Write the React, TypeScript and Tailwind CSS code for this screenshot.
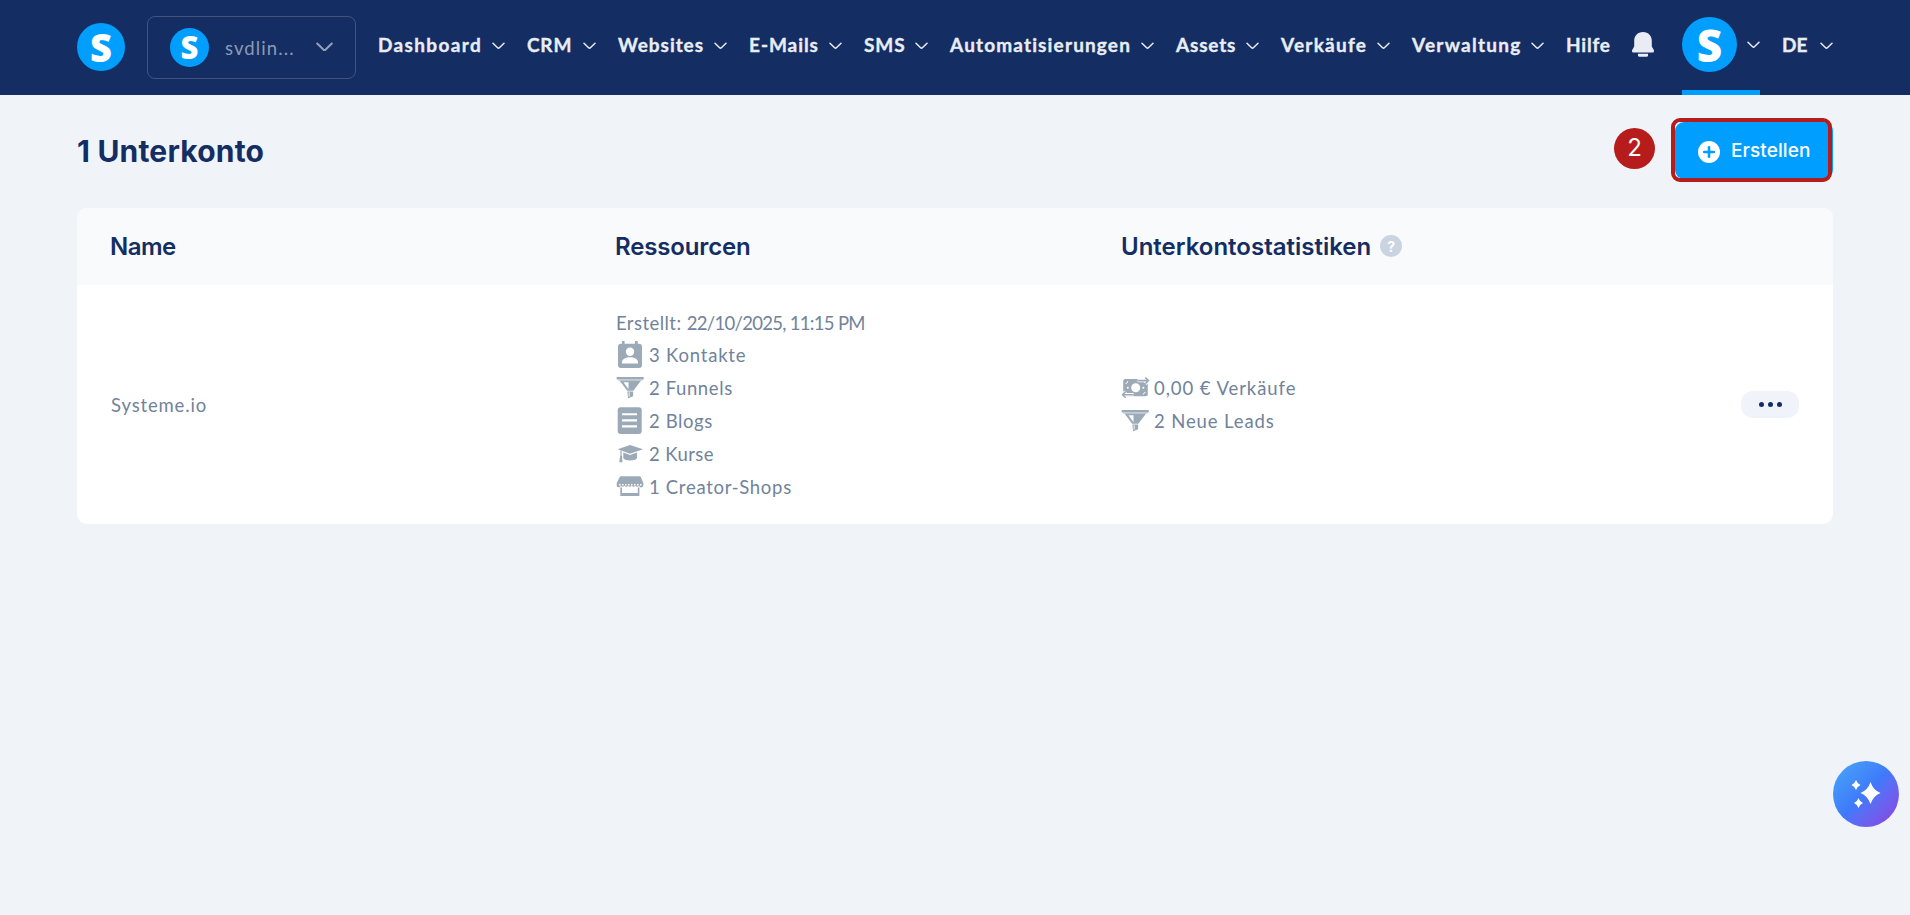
import type { ReactNode } from "react";

type NavItem = { label: string; width: string; tracking: string; menu?: boolean };

const navItems: NavItem[] = [
  { label: "Dashboard", width: "w-[149px]", tracking: "tracking-[1.35px]", menu: true },
  { label: "CRM", width: "w-[91px]", tracking: "tracking-[0.8px]", menu: true },
  { label: "Websites", width: "w-[131px]", tracking: "tracking-[0.95px]", menu: true },
  { label: "E-Mails", width: "w-[115px]", tracking: "tracking-[0.95px]", menu: true },
  { label: "SMS", width: "w-[86px]", tracking: "tracking-[0.9px]", menu: true },
  { label: "Automatisierungen", width: "w-[226px]", tracking: "tracking-[1.15px]", menu: true },
  { label: "Assets", width: "w-[105px]", tracking: "tracking-[0.8px]", menu: true },
  { label: "Verkäufe", width: "w-[131px]", tracking: "tracking-[1.25px]", menu: true },
  { label: "Verwaltung", width: "w-[154px]", tracking: "tracking-[1.25px]", menu: true },
  { label: "Hilfe", width: "w-[66px]", tracking: "tracking-[0.8px]" },
];

function Chevron({ className = "" }: { className?: string }) {
  return (
    <svg viewBox="0 0 13 8" className={`w-[13px] h-2 shrink-0 ${className}`} fill="none">
      <path d="M1 1.2 5.6 5.7Q6.5 6.5 7.4 5.7L12 1.2" stroke="currentColor" strokeWidth="1.5" strokeLinecap="round" />
    </svg>
  );
}

function Logo({ size, text }: { size: string; text: string }) {
  return (
    <div className={`shrink-0 rounded-full bg-[#009fff] flex items-center justify-center ${size}`}>
      <span className={`font-['Open_Sans',sans-serif] font-extrabold leading-none text-white ${text}`}>S</span>
    </div>
  );
}

function RowIcon({ children }: { children: ReactNode }) {
  return (
    <svg viewBox="0 0 29 33" className="w-[29px] h-[33px] shrink-0" fill="#9caab7">
      {children}
    </svg>
  );
}

function ContactIcon() {
  return (
    <RowIcon>
      <path d="M6 2h2.6v2.7H19V2h2.7v2.7H23a3 3 0 0 1 3 3V26a3 3 0 0 1-3 3H5a3 3 0 0 1-3-3V7.7a3 3 0 0 1 3-3h1z" />
      <circle cx="14" cy="12.7" r="4.2" fill="#fff" />
      <path d="M6 24.5v-1.5c0-3 4-4.8 8-4.8s8 1.8 8 4.8v1.5z" fill="#fff" />
    </RowIcon>
  );
}

function FunnelIcon() {
  return (
    <RowIcon>
      <path d="M.7 5h27v2.4H.7z" />
      <path d="M2 7.4h24.5v1.2H2z" opacity=".55" />
      <path d="M3.5 8.6h21.6l-7.7 10.2h-6.2z" />
      <path d="M7.5 10.2h5v7z" fill="#fff" />
      <path d="M11.3 19.5h5.8v4.7l-5 2.1z" />
      <path d="M12.5 20.2h1.3v4.2h-1.3z" fill="#fff" opacity=".7" />
    </RowIcon>
  );
}

function BlogIcon() {
  return (
    <RowIcon>
      <rect x="1.7" y="2.3" width="24" height="26.7" rx="3" />
      <path d="M6 9.2h15M6 15.4h15M6 21.4h15" stroke="#fff" strokeWidth="2.1" />
    </RowIcon>
  );
}

function CourseIcon() {
  return (
    <RowIcon>
      <path d="M14 7 27 11.2 14 15.8 1.7 11.2z" />
      <path d="M7.3 14.5 14 17l7-2.5v5.7c-2 3-11.7 3-13.7 0z" />
      <path d="M5 12.5v6" stroke="#9caab7" strokeWidth="1.2" />
      <path d="M4.2 17.8H6l.4 6.4H3.3z" />
    </RowIcon>
  );
}

function ShopIcon() {
  return (
    <RowIcon>
      <path d="M5 5.3h18.5a1.5 1.5 0 0 1 1.4 1L27.4 12v1.7a2 2 0 0 1-4.3 1 2.1 2.1 0 0 1-3.7 0 2.1 2.1 0 0 1-3.7 0 2.1 2.1 0 0 1-3.6 0 2.1 2.1 0 0 1-3.7 0 2.1 2.1 0 0 1-3.7 0 2 2 0 0 1-4-1V12l2.9-5.7a1.5 1.5 0 0 1 1.4-1z" />
      <path d="M3 13.8h22.5" stroke="#fff" strokeWidth="1.5" strokeDasharray="1.5 1.5" />
      <path d="M4.3 16.5H6V22h15.8v-5.5h1.6V25H4.3z" />
    </RowIcon>
  );
}

function SalesIcon() {
  const arrows = "M16.5 8.6H27M24.3 5.5l3.1 3.1-3.1 3.1M12.5 22.7H2M4.7 19.6l-3.1 3.1 3.1 3.1";
  return (
    <RowIcon>
      <rect x="2.2" y="7" width="24.6" height="17.2" rx="2" />
      <circle cx="14.7" cy="15.7" r="4.5" fill="#fff" />
      <circle cx="6.8" cy="15.7" r="1" fill="#fff" />
      <circle cx="22.3" cy="15.7" r="1" fill="#fff" />
      <path d="M6.8 9.2q-.2 2-2.2 2.3M24.5 20.3q-2 .3-2.3 2.2" fill="none" stroke="#fff" />
      <path d={arrows} fill="none" stroke="#fff" strokeWidth="3.4" />
      <path d={arrows} fill="none" stroke="#9caab7" strokeWidth="1.6" />
    </RowIcon>
  );
}

const resources = [
  { icon: <ContactIcon />, label: "3 Kontakte", tracking: "tracking-[0.8px]" },
  { icon: <FunnelIcon />, label: "2 Funnels", tracking: "tracking-[0.6px]" },
  { icon: <BlogIcon />, label: "2 Blogs", tracking: "tracking-[0.6px]" },
  { icon: <CourseIcon />, label: "2 Kurse", tracking: "tracking-[0.4px]" },
  { icon: <ShopIcon />, label: "1 Creator-Shops", tracking: "tracking-[0.7px]" },
];

const stats = [
  { icon: <SalesIcon />, label: "0,00 € Verkäufe", tracking: "tracking-[0.93px]" },
  { icon: <FunnelIcon />, label: "2 Neue Leads", tracking: "tracking-[0.88px]" },
];

function Resource({ icon, label, tracking }: { icon: ReactNode; label: string; tracking: string }) {
  return (
    <div className="flex h-[33px] items-center gap-1">
      {icon}
      <span className={`pt-px ${tracking}`}>{label}</span>
    </div>
  );
}

function Header() {
  return (
    <header className="flex h-[95px] items-start bg-[#142d63] px-[77px] font-[Lato,sans-serif] text-[#e9edf3]">
      <div className="flex h-[94px] w-[301px] shrink-0 items-center">
        <Logo size="size-12" text="text-[38px]" />
        <button className="ml-[22px] flex h-[63px] w-[209px] items-center rounded-[8px] border border-[#40547f] pl-[22px]">
          <Logo size="size-[39px]" text="text-[31px]" />
          <span className="ml-4 w-[91px] pt-[3px] text-left text-[18.5px] tracking-[1.1px] text-[#8c9bb3]">svdlin...</span>
          <svg viewBox="0 0 17 10" className="h-[10px] w-[17px]" fill="none">
            <path d="M1.2 1.5 7.3 7.4Q8.5 8.5 9.7 7.4L15.8 1.5" stroke="#94a4b8" strokeWidth="2" strokeLinecap="round" />
          </svg>
        </button>
      </div>
      <nav className="flex h-[91px] shrink-0 items-center text-[19px] font-bold [-webkit-text-stroke:0.35px]">
        {navItems.map((item) => (
          <a key={item.label} className={`flex shrink-0 items-center justify-between ${item.width}`}>
            <span className={item.tracking}>{item.label}</span>
            {item.menu && <Chevron className="mr-[22px]" />}
          </a>
        ))}
      </nav>
      <div className="flex h-[89px] w-[50px] shrink-0 items-center">
        <svg viewBox="0 0 22 25" className="h-[25px] w-[22px]" fill="currentColor">
          <path d="M11 0c5.6 0 8.8 4 8.8 9v5.5l1.9 3.3c.7 1.3.1 2.7-1.5 2.7H1.8c-1.6 0-2.2-1.4-1.5-2.7l1.9-3.3V9C2.2 4 5.4 0 11 0z" />
          <path d="M6 21.7h10v1.5q0 1.5-1.5 1.5h-7Q6 24.7 6 23.2z" />
        </svg>
      </div>
      <div className="flex h-[95px] w-[78px] shrink-0 items-center justify-between border-b-[5px] border-[#009fff] pb-px">
        <Logo size="size-[55px]" text="text-[44px]" />
        <Chevron />
      </div>
      <div className="ml-[22px] flex h-[91px] w-[51px] shrink-0 items-center justify-between text-[19px] font-bold [-webkit-text-stroke:0.35px]">
        <span>DE</span>
        <Chevron />
      </div>
    </header>
  );
}

export default function App() {
  return (
    <div className="h-[915px] overflow-hidden bg-[#f0f4f9] font-[Lato,sans-serif]">
      <Header />
      <main className="px-[77px]">
        <div className="flex h-[113px] items-center justify-between font-[Inter,sans-serif]">
          <h1 className="pb-px text-[30px] font-bold tracking-[0.2px] text-[#142d63]">1 Unterkonto</h1>
          <div className="flex items-center pb-[3px]">
            <span className="mr-4 mb-[3px] flex size-[41px] items-center justify-center rounded-full bg-[#b71c1c] pb-px text-[24px] text-white">2</span>
            <button className="relative flex h-[65px] w-[162px] items-center p-[4px] pr-0">
              <span className="flex h-[57px] w-[158px] items-center rounded-[9px] bg-[#009fff] pt-[3px] pl-[23px] text-[19px] font-medium tracking-[0.1px] text-white">
                <svg viewBox="0 0 22 22" className="mr-[11px] size-[22px]">
                  <circle cx="11" cy="11" r="11" fill="#fff" />
                  <path d="M11 6.2v9.6M6.2 11h9.6" stroke="#009fff" strokeWidth="2.6" strokeLinecap="round" />
                </svg>
                Erstellen
              </span>
              <span className="absolute top-0 left-0 h-16 w-[161px] rounded-[9px] border-4 border-[#b71c1c]" />
            </button>
          </div>
        </div>

        <section className="overflow-hidden rounded-[10px] bg-white">
          <div className="flex h-[77px] items-center bg-[#f8fafc] pt-px pl-[33px] font-[Inter,sans-serif] text-[24px] font-semibold text-[#142d63]">
            <div className="w-[505px] tracking-[-0.5px]">Name</div>
            <div className="w-[506px] tracking-[-0.15px]">Ressourcen</div>
            <div className="flex items-center gap-[9px]">
              Unterkontostatistiken
              <span className="mb-[2px] flex size-[22px] items-center justify-center rounded-full bg-[#cad4e1] text-[14px] font-bold text-white">?</span>
            </div>
          </div>
          <div className="flex h-[239px] items-center pl-[33px] pr-[34px] text-[18.5px] text-[#71839b]">
            <div className="w-[506px] pt-[3px] pl-px tracking-[0.85px]">Systeme.io</div>
            <div className="w-[505px] pt-px">
              <div className="h-[33px] leading-[34px]">
                <span className="tracking-[0.45px]">Erstellt: </span>
                <span className="tracking-[-0.7px]">22/10/2025, 11:15 PM</span>
              </div>
              {resources.map((r) => (
                <Resource key={r.label} {...r} />
              ))}
            </div>
            <div className="pt-px">
              {stats.map((s) => (
                <Resource key={s.label} {...s} />
              ))}
            </div>
            <button className="ml-auto flex h-[27px] w-[58px] items-center justify-center gap-1 rounded-[12px] bg-[#f0f4fa]">
              <span className="size-[5px] rounded-full bg-[#142d63]" />
              <span className="size-[5px] rounded-full bg-[#142d63]" />
              <span className="size-[5px] rounded-full bg-[#142d63]" />
            </button>
          </div>
        </section>
      </main>

      {/* Assistant */}
      <button className="fixed right-[11px] bottom-[88px] flex size-[66px] items-center justify-center rounded-full bg-linear-135 from-[#4ba8f8] via-[#3f78fa] to-[#8a3be0]">
        <svg viewBox="0 0 66 66" className="size-[66px]" fill="#fff">
          <path d="M37.5 21q2.6 8 10 11-7.4 3-10 11-2.6-8-10-11 7.4-3 10-11zM23 19q1.2 3.7 4.5 5-3.3 1.3-4.5 5-1.2-3.700-4.5-5 3.3-1.3 4.5-5zM25.5 37q1.2 3.7 4.5 5-3.3 1.3-4.5 5-1.2-3.7-4.5-5 3.3-1.3 4.5-5z" />
        </svg>
      </button>
    </div>
  );
}
